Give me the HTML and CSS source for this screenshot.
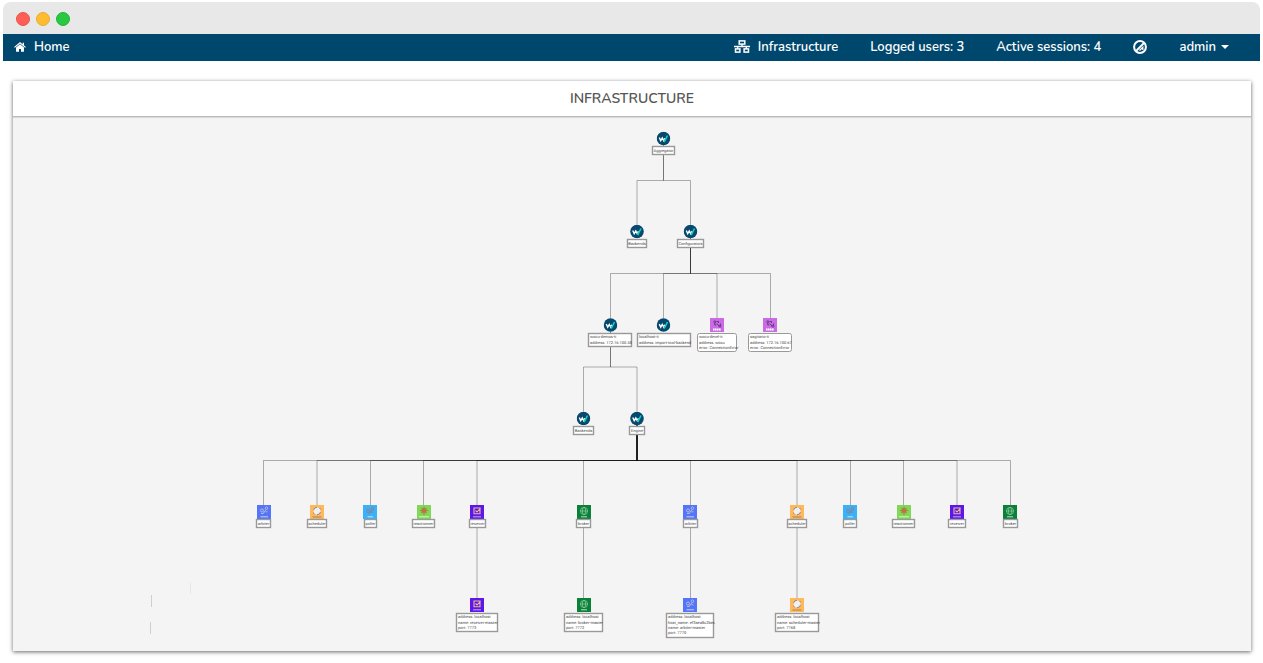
FILE: index.html
```html
<!DOCTYPE html>
<html lang="en">
<head>
<meta charset="utf-8">
<title>Infrastructure</title>
<link rel="stylesheet" href="styles.css">
</head>
<body>
<div class="window">
  <div class="titlebar">
    <span class="dot dot-red"></span><span class="dot dot-yellow"></span><span class="dot dot-green"></span>
  </div>
  <nav class="navbar">
    <a class="nav-item" href="#">
      <svg class="icon-home" viewBox="0 0 12 10" width="12" height="10" aria-hidden="true"><path d="M6 2.2L2 5.6V9.3Q2 9.8 2.5 9.8H5V7H7V9.8H9.5Q10 9.8 10 9.3V5.6Z" fill="#fff"/><path d="M.5 5.4L6 .9L11.5 5.4" fill="none" stroke="#fff" stroke-width="1.2"/><path d="M8.6.8H10V3.6L8.6 2.4Z" fill="#fff"/></svg>
      Home</a>
    <div class="nav-right">
      <a class="nav-item" href="#">
        <svg viewBox="0 0 16 13" width="16" height="13" aria-hidden="true"><g fill="none" stroke="#fff" stroke-width="1.5"><rect x="5.2" y=".9" width="5.6" height="3.2"/><rect x="1.5" y="8.9" width="4.4" height="3.2"/><rect x="10.1" y="8.9" width="4.4" height="3.2"/><path d="M8 4V6.5M0 6.5H16M3.7 6.5V9M12.3 6.5V9" stroke-width="1.3"/></g></svg>
        Infrastructure</a>
      <span>Logged users: 3</span>
      <span>Active sessions: 4</span>
      <button class="nav-button" type="button" aria-label="Status">
        <svg viewBox="0 0 14 14" width="14" height="14" aria-hidden="true"><g fill="none" stroke="#fff"><circle cx="7" cy="7" r="5.9" stroke-width="2"/><path d="M3 11L11 3" stroke-width="1.8"/><path d="M6.5 10.5L9.8 7.2V10" stroke-width="1.3"/></g></svg>
      </button>
      <button class="nav-button" type="button">admin <svg viewBox="0 0 8 4" width="8" height="4" aria-hidden="true"><path d="M0 0H8L4 4Z" fill="#fff"/></svg></button>
    </div>
  </nav>
  <main class="panel">
    <h1 class="panel-title">INFRASTRUCTURE</h1>
    <svg class="diagram" viewBox="13 117 1238 534" role="img" aria-label="Infrastructure tree">
      <defs>
        <symbol id="logo" viewBox="0 0 14 14"><circle cx="7" cy="7" r="7" fill="#fff"/><circle cx="7" cy="7" r="6.8" fill="#06486e"/><path d="M2.8 6L4.2 9.2L5.8 6.4L7.2 9.2L8.3 6.8" fill="none" stroke="#fff" stroke-width="1.4"/><path d="M7.5 8.2L8.2 9.6L11 4" fill="none" stroke="#19d3c0" stroke-width="1.5"/></symbol>
        <symbol id="error" viewBox="0 0 14 14"><rect width="14" height="14" fill="#cb6ae6"/><g fill="none" stroke="#5b3473" stroke-width=".9"><circle cx="4.8" cy="3.8" r="1"/><path d="M4.8 5V7H6.2M6.5 3.5H8.5V5M6.8 5.5L9 8M10.5 5.5V7"/><circle cx="10" cy="8.2" r="1"/></g><path d="M3 11.5H11" stroke="#fff" stroke-width="1.8" stroke-dasharray="1.6 .4"/></symbol>
        <symbol id="arbiter" viewBox="0 0 14 14"><rect width="14" height="14" fill="#5474fa"/><g fill="none" stroke="#b6b9d8" stroke-width="1"><circle cx="5" cy="5.5" r="1.5"/><circle cx="9.5" cy="3.2" r="1.3"/><path d="M6.2 8.5L8 6L9 4.5M8.5 6.8H10.5M4 8.5H6.5"/></g><path d="M3.5 11.8H11" stroke="#c8d1ff" stroke-width="1"/></symbol>
        <symbol id="poller" viewBox="0 0 14 14"><rect width="14" height="14" fill="#38b3fb"/><g fill="none" stroke="#7a8ba5" stroke-width="1.2"><circle cx="5.2" cy="6" r="1.6"/><circle cx="9.5" cy="3.6" r="1.3"/><path d="M6.3 8.8L8 6.2L9 5M8 7.2H10.3"/></g><path d="M4.5 11.8H10" stroke="#c5eaff" stroke-width="1"/></symbol>
        <symbol id="scheduler" viewBox="0 0 14 14"><rect width="14" height="14" fill="#fdb95a"/><circle cx="7" cy="6" r="3.5" fill="#eef0f4"/><path d="M3.5 5.2Q4 2.5 7 2.2M10.5 7Q10 9.5 7 9.8M9.5 3L11 4.5M4.500 9L3 7.7" fill="none" stroke="#8e8792" stroke-width="1"/><path d="M2.500 12H11.500" stroke="#a98262" stroke-width="1"/></symbol>
        <symbol id="reactionner" viewBox="0 0 14 14"><rect width="14" height="14" fill="#7fd957"/><circle cx="7" cy="5.5" r="2.6" fill="#b77843"/><path d="M7 1.5V10M3 5.5H11M4.2 2.7L9.8 8.3M9.8 2.7L4.2 8.3" stroke="#b77843" stroke-width="1"/><path d="M2 11.8H12" stroke="#d9f5cb" stroke-width="1"/></symbol>
        <symbol id="receiver" viewBox="0 0 14 14"><rect width="14" height="14" fill="#5e17eb"/><path d="M4 3H10V8.7H4ZM5.5 5.5L7 7L10.5 3.2" fill="none" stroke="#e8ba8c" stroke-width="1.1"/><path d="M3 11.8H11" stroke="#c8a8f5" stroke-width="1"/></symbol>
        <symbol id="broker" viewBox="0 0 14 14"><rect width="14" height="14" fill="#0b8038"/><g fill="none" stroke="#88c69c" stroke-width=".8"><circle cx="7" cy="6" r="3.6"/><ellipse cx="7" cy="6" rx="1.6" ry="3.6"/><path d="M3.4 6H10.6"/></g><path d="M4 11.8H10" stroke="#b8dfc5" stroke-width="1"/></symbol>
      </defs>

      <g class="edges">
        <path d="M663.5 138V180.5H637V231"/><path d="M663.5 138V180.5H690.5V231"/>
        <path d="M690.5 231V273.5H610.5V325"/><path d="M690.5 231V273.5H663.5V325"/><path d="M690.5 231V273.5H717V325"/><path d="M690.5 231V273.5H770.5V325"/>
        <path d="M610.5 325V367H583.5V418"/><path d="M610.5 325V367H637V418"/>
        <path d="M637 418V460.5H263.5V512"/><path d="M637 418V460.5H317V512"/><path d="M637 418V460.5H370.5V512"/><path d="M637 418V460.5H423.5V512"/><path d="M637 418V460.5H477V512"/><path d="M637 418V460.5H583.5V512"/>
        <path d="M637 418V460.5H690.5V512"/><path d="M637 418V460.5H797V512"/><path d="M637 418V460.5H850.5V512"/><path d="M637 418V460.5H903.5V512"/><path d="M637 418V460.5H957V512"/><path d="M637 418V460.5H1010.5V512"/>
        <path d="M477 512V604"/><path d="M583.5 512V604"/><path d="M690.5 512V604"/><path d="M797 512V604"/>
        <path class="faint" d="M151.5 595V607M150.5 622V634"/><path class="fainter" d="M190.5 583V594"/>
      </g>

      <g class="icons">
        <use href="#logo" x="656.5" y="131.5" width="14" height="14"/>
        <use href="#logo" x="630" y="224.5" width="14" height="14"/><use href="#logo" x="683.5" y="224.5" width="14" height="14"/>
        <use href="#logo" x="603.5" y="318" width="14" height="14"/><use href="#logo" x="656.5" y="318" width="14" height="14"/>
        <use href="#error" x="710" y="318" width="14" height="14"/><use href="#error" x="763" y="318" width="14" height="14"/>
        <use href="#logo" x="576.5" y="411.5" width="14" height="14"/><use href="#logo" x="630" y="411.5" width="14" height="14"/>
        <use href="#arbiter" x="257" y="505" width="14" height="14"/><use href="#scheduler" x="310" y="505" width="14" height="14"/>
        <use href="#poller" x="363" y="505" width="14" height="14"/><use href="#reactionner" x="417" y="505" width="14" height="14"/>
        <use href="#receiver" x="470" y="505" width="14" height="14"/><use href="#broker" x="577" y="505" width="14" height="14"/>
        <use href="#arbiter" x="683" y="505" width="14" height="14"/><use href="#scheduler" x="790" y="505" width="14" height="14"/>
        <use href="#poller" x="843" y="505" width="14" height="14"/><use href="#reactionner" x="897" y="505" width="14" height="14"/>
        <use href="#receiver" x="950" y="505" width="14" height="14"/><use href="#broker" x="1003" y="505" width="14" height="14"/>
        <use href="#receiver" x="470" y="598" width="14" height="14"/><use href="#broker" x="577" y="598" width="14" height="14"/>
        <use href="#arbiter" x="683" y="598" width="14" height="14"/><use href="#scheduler" x="790" y="598" width="14" height="14"/>
      </g>

      <g class="boxes">
        <rect x="652.5" y="146.5" width="22" height="8"/>
        <rect x="627.5" y="239.5" width="19" height="8"/><rect x="677.5" y="239.5" width="26" height="8"/>
        <rect x="588.5" y="333.5" width="43" height="13"/><rect x="637.5" y="333.5" width="53" height="13"/>
        <rect class="failed" x="697.5" y="333.5" width="39" height="18" rx="2"/><rect class="failed" x="748.5" y="333.5" width="43" height="18" rx="2"/>
        <rect x="573.5" y="426.5" width="20" height="8"/><rect x="629.5" y="426.5" width="15" height="8"/>
        <rect x="256.5" y="519.5" width="14" height="8"/><rect x="307.5" y="519.5" width="19" height="8"/><rect x="364.5" y="519.5" width="12" height="8"/><rect x="412.5" y="519.5" width="22" height="8"/><rect x="469.5" y="519.5" width="16" height="8"/><rect x="576.5" y="519.5" width="14" height="8"/>
        <rect x="683.5" y="519.5" width="14" height="8"/><rect x="787.5" y="519.5" width="19" height="8"/><rect x="843.5" y="519.5" width="13" height="8"/><rect x="892.5" y="519.5" width="22" height="8"/><rect x="948.5" y="519.5" width="17" height="8"/><rect x="1003.5" y="519.5" width="14" height="8"/>
        <rect x="456.5" y="613.5" width="41" height="18"/><rect x="564.5" y="613.5" width="38" height="18"/><rect x="666.5" y="613.5" width="47" height="24"/><rect x="775.5" y="613.5" width="43" height="18"/>
      </g>

      <g class="labels">
        <text x="663.5" y="152">Aggregator</text>
        <text x="637" y="245">Backends</text><text x="690.5" y="245">Configurators</text>
        <text x="583.5" y="432">Backends</text><text x="637" y="432">Engine</text>
        <text x="263.5" y="525">arbiter</text><text x="317" y="525">scheduler</text><text x="370.5" y="525">poller</text><text x="423.5" y="525">reactionner</text><text x="477.5" y="525">receiver</text><text x="583.5" y="525">broker</text>
        <text x="690.5" y="525">arbiter</text><text x="797" y="525">scheduler</text><text x="850" y="525">poller</text><text x="903.5" y="525">reactionner</text><text x="957" y="525">receiver</text><text x="1010.5" y="525">broker</text>
      </g>
      <g class="details">
        <text><tspan x="590" y="338">wocu-demos-ti</tspan><tspan x="590" y="344">address: 172.16.100.48</tspan></text>
        <text><tspan x="639" y="338">localhost-ti</tspan><tspan x="639" y="344">address: import-tool-backend</tspan></text>
        <text><tspan x="699" y="338">wocu-devel-ti</tspan><tspan x="699" y="344">address: wocu</tspan><tspan x="699" y="349">error: ConnectionError</tspan></text>
        <text><tspan x="750" y="338">sagitario-ti</tspan><tspan x="750" y="344">address: 172.16.100.67</tspan><tspan x="750" y="349">error: ConnectionError</tspan></text>
        <text><tspan x="458" y="618">address: localhost</tspan><tspan x="458" y="624">name: receiver-master</tspan><tspan x="458" y="629">port: 7773</tspan></text>
        <text><tspan x="566" y="618">address: localhost</tspan><tspan x="566" y="624">name: broker-master</tspan><tspan x="566" y="629">port: 7772</tspan></text>
        <text><tspan x="668" y="618">address: localhost</tspan><tspan x="668" y="624">host_name: ef3aea8c2bec</tspan><tspan x="668" y="629">name: arbiter-master</tspan><tspan x="668" y="634">port: 7770</tspan></text>
        <text><tspan x="777" y="618">address: localhost</tspan><tspan x="777" y="624">name: scheduler-master</tspan><tspan x="777" y="629">port: 7768</tspan></text>
      </g>
    </svg>
  </main>
</div>
</body>
</html>
```
FILE: styles.css
```css
* { box-sizing: border-box; }

body {
  margin: 0;
  padding: 2px 3px 12px;
  background: #fff;
  font-family: Nunito, Lato, "Noto Sans", sans-serif;
}

.titlebar {
  display: flex;
  align-items: center;
  gap: 6px;
  height: 32px;
  padding: 2px 13px 0;
  background: #e8e8e8;
  border-radius: 8px 8px 0 0;
}

.dot {
  width: 14px;
  height: 14px;
  border: 1px solid;
  border-radius: 50%;
}

.dot-red { background: #ff5f57; border-color: #ea534c; }
.dot-yellow { background: #febc2e; border-color: #e5ab3c; }
.dot-green { background: #28c840; border-color: #24b33a; }

.navbar {
  display: flex;
  align-items: center;
  justify-content: space-between;
  height: 27px;
  padding: 0 31px 2px 11px;
  background: #00476d;
  color: #fff;
  font-size: 13px;
  font-weight: 600;
  line-height: 20px;
}

.nav-item {
  display: flex;
  align-items: center;
  gap: 8px;
  color: inherit;
  text-decoration: none;
}

.nav-right {
  display: flex;
  align-items: center;
  gap: 32px;
}

.nav-button {
  display: flex;
  align-items: center;
  gap: 5px;
  padding: 0;
  border: 0;
  background: none;
  color: inherit;
  font: inherit;
}

.panel {
  margin: 20px 9px 0 10px;
  background: #f4f4f4;
  box-shadow: 0 1px 4px rgba(0, 0, 0, 0.6);
}

.panel-title {
  margin: 0;
  padding: 8px 0 7px;
  background: #fff;
  border-bottom: 1px solid #b8b8b8;
  box-shadow: 0 1px 1px rgba(0, 0, 0, 0.1);
  color: #555;
  font-size: 14px;
  font-weight: 600;
  line-height: 20px;
  text-align: center;
}

.diagram {
  display: block;
  width: 100%;
  height: auto;
}

.edges path {
  fill: none;
  stroke: #000;
  stroke-opacity: 0.3;
}

.edges .faint { stroke-opacity: 0.15; }
.edges .fainter { stroke-opacity: 0.05; }

.boxes rect {
  fill: #fff;
  stroke: #999;
  stroke-width: 1.4;
}

.boxes .failed { stroke-width: 1; }

.labels, .details {
  fill: #444;
  font-family: Roboto, "Liberation Sans", Arial, sans-serif;
  font-size: 4px;
  text-rendering: geometricPrecision;
}

.labels { text-anchor: middle; }
```
